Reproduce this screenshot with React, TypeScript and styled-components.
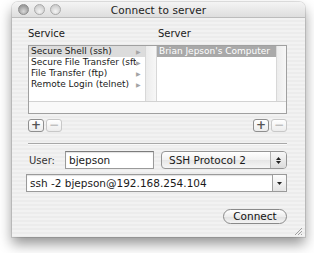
import React from 'react';
import styled, { createGlobalStyle } from 'styled-components';

const GlobalStyle = createGlobalStyle`
    html, body {
        margin: 0;
        padding: 0;
        background: #ffffff;
    }
    body {
        font-family: 'DejaVu Sans', 'Liberation Sans', sans-serif;
        color: #1a1a1a;
    }
`;

const Desktop = styled.div`
    width: 314px;
    height: 253px;
    padding: 2px 9px 0 12px;
    box-sizing: border-box;
`;

const Window = styled.div`
    width: 293px;
    height: 235px;
    border-radius: 6px 6px 0 0;
    overflow: hidden;
    display: flex;
    flex-direction: column;
    background: repeating-linear-gradient(to bottom, #f2f2f2 0, #f2f2f2 2px, #ececec 2px, #ececec 4px);
    box-shadow: 0 7px 13px rgba(0, 0, 0, 0.42), 0 0 0 1px rgba(0, 0, 0, 0.1);
`;

const TitleBar = styled.div`
    height: 15px;
    flex: none;
    display: grid;
    grid-template-columns: 1fr auto 1fr;
    align-items: center;
    background: linear-gradient(to bottom, #f4f4f4, #dedede);
    border-bottom: 1px solid #bcbcbc;
    padding: 0 6px;
`;

const Lights = styled.div`
    display: flex;
    gap: 5px;
    align-items: center;
`;

const Light = styled.span<{ $dark?: boolean }>`
    width: 11px;
    height: 11px;
    border-radius: 50%;
    box-sizing: border-box;
    border: 1px solid ${p => (p.$dark ? '#8d8d8d' : '#a9a9a9')};
    background: ${p =>
        p.$dark
            ? 'radial-gradient(circle at 50% 70%, #d8d8d8, #9c9c9c 70%)'
            : 'radial-gradient(circle at 50% 70%, #f4f4f4, #cdcdcd 75%)'};
`;

const Title = styled.div`
    font-size: 10.5px;
    color: #222;
    letter-spacing: 0.1px;
`;

const Body = styled.div`
    flex: 1;
    display: flex;
    flex-direction: column;
    padding: 9px 18px 0 16px;
    position: relative;
`;

const Labels = styled.div`
    display: grid;
    grid-template-columns: 130px 1fr;
    font-size: 10px;
    height: 13px;
    line-height: 13px;
    margin-bottom: 5px;
`;

const Browser = styled.div`
    height: 69px;
    border: 1px solid #a0a0a0;
    background: #fff;
    display: flex;
    flex-direction: column;
    box-sizing: border-box;
`;

const Columns = styled.div`
    flex: 1;
    display: grid;
    grid-template-columns: 116px 12px 119px 1fr;
`;

const Column = styled.div`
    background: #fff;
    display: flex;
    flex-direction: column;
    min-width: 0;
`;

const Scroller = styled.div`
    background: linear-gradient(to right, #ececec, #f7f7f7);
    border-left: 1px solid #d8d8d8;
    border-right: 1px solid #d8d8d8;
`;

const EndScroller = styled.div`
    background: linear-gradient(to right, #ececec, #f7f7f7);
    border-left: 1px solid #d8d8d8;
`;

const Row = styled.div<{ $sel?: 'light' | 'dark' }>`
    height: 11px;
    line-height: 11px;
    font-size: 9px;
    padding-left: 2px;
    display: flex;
    white-space: nowrap;
    overflow: hidden;
    background: ${p => (p.$sel === 'light' ? '#dcdcdc' : p.$sel === 'dark' ? '#a9a9a9' : 'transparent')};
    color: ${p => (p.$sel === 'dark' ? '#fff' : '#1a1a1a')};
`;

const RowText = styled.span`
    flex: 1;
    min-width: 0;
    overflow: hidden;
    text-overflow: clip;
`;

const Arrow = styled.span`
    font-size: 6px;
    color: #a4a4a4;
    width: 9px;
    flex: none;
`;

const BottomStrip = styled.div`
    height: 11px;
    border-top: 1px solid #d2d2d2;
    background: #f9f9f9;
`;

const ButtonRow = styled.div`
    display: flex;
    justify-content: space-between;
    margin-top: 5px;
    height: 13px;
`;

const PairGroup = styled.div`
    display: flex;
    gap: 2px;
`;

const SmallButton = styled.div<{ $disabled?: boolean }>`
    width: 16px;
    height: 13px;
    box-sizing: border-box;
    border: 1px solid ${p => (p.$disabled ? '#c8c8c8' : '#8f8f8f')};
    border-radius: 3px;
    background: linear-gradient(to bottom, #ffffff, #ececec);
    color: ${p => (p.$disabled ? '#c0c0c0' : '#555')};
    font-size: 12px;
    line-height: 10px;
    text-align: center;
    font-weight: bold;
`;

const Separator = styled.div`
    height: 1px;
    background: #a8a8a8;
    margin: 11px 0 6px;
    border-bottom: 1px solid #fafafa;
`;

const FormRow = styled.div`
    display: flex;
    align-items: center;
    height: 18px;
    margin-bottom: 5px;
`;

const UserLabel = styled.span`
    width: 36px;
    flex: none;
    font-size: 10px;
    color: #333;
    padding-left: 1px;
`;

const TextField = styled.div`
    width: 89px;
    height: 18px;
    box-sizing: border-box;
    border: 1px solid #9a9a9a;
    border-top-color: #7c7c7c;
    background: #fff;
    box-shadow: inset 0 1px 1px rgba(0, 0, 0, 0.12);
    font-size: 10.5px;
    line-height: 16px;
    padding-left: 3px;
    margin-right: 7px;
`;

const Popup = styled.div`
    flex: 1;
    height: 18px;
    box-sizing: border-box;
    border: 1px solid #959595;
    border-radius: 4px;
    background: linear-gradient(to bottom, #ffffff, #f1f1f1 50%, #e6e6e6 51%, #f6f6f6);
    display: flex;
    align-items: center;
    font-size: 10.5px;
    padding-left: 7px;
    overflow: hidden;
`;

const PopupText = styled.span`
    flex: 1;
`;

const Stepper = styled.div`
    width: 15px;
    align-self: stretch;
    border-left: 1px solid #b0b0b0;
    background: linear-gradient(to bottom, #f8f8f8, #dcdcdc);
    display: flex;
    flex-direction: column;
    align-items: center;
    justify-content: center;
    gap: 1px;
`;

const Combo = styled.div`
    flex: 1;
    height: 18px;
    box-sizing: border-box;
    border: 1px solid #9a9a9a;
    background: #fff;
    box-shadow: inset 0 1px 1px rgba(0, 0, 0, 0.12);
    display: flex;
    align-items: center;
    font-size: 10.5px;
    padding-left: 3px;
    margin-left: -2px;
`;

const ComboText = styled.span`
    flex: 1;
    white-space: nowrap;
`;

const ComboButton = styled.div`
    width: 13px;
    height: 16px;
    border-left: 1px solid #a0a0a0;
    border-radius: 0 2px 2px 0;
    background: linear-gradient(to bottom, #fdfdfd, #e4e4e4);
    display: flex;
    align-items: center;
    justify-content: center;
`;

const Footer = styled.div`
    display: flex;
    justify-content: flex-end;
    margin-top: 12px;
`;

const ConnectButton = styled.div`
    width: 64px;
    height: 15px;
    box-sizing: border-box;
    border: 1px solid #8a8a8a;
    border-radius: 8px;
    background: linear-gradient(to bottom, #ffffff, #ededed 50%, #e0e0e0 51%, #f4f4f4);
    font-size: 10.5px;
    line-height: 13px;
    text-align: center;
    color: #111;
`;

const Grip = styled.svg`
    position: absolute;
    right: 2px;
    bottom: 1px;
`;

function Triangle({ up }: { up?: boolean }) {
    return (
        <svg width="5" height="3" viewBox="0 0 5 3">
            <path d={up ? 'M2.5 0 L5 3 L0 3 Z' : 'M0 0 L5 0 L2.5 3 Z'} fill="#222" />
        </svg>
    );
}

const services = ['Secure Shell (ssh)', 'Secure File Transfer (sftp)', 'File Transfer (ftp)', 'Remote Login (telnet)'];

export default function App() {
    return (
        <Desktop>
            <GlobalStyle />
            <Window>
                <TitleBar>
                    <Lights>
                        <Light $dark />
                        <Light />
                        <Light />
                    </Lights>
                    <Title>Connect to server</Title>
                    <div />
                </TitleBar>
                <Body>
                    <Labels>
                        <span>Service</span>
                        <span>Server</span>
                    </Labels>
                    <Browser>
                        <Columns>
                            <Column>
                                {services.map((s, i) => (
                                    <Row key={s} $sel={i === 0 ? 'light' : undefined}>
                                        <RowText>{s}</RowText>
                                        <Arrow>▶</Arrow>
                                    </Row>
                                ))}
                            </Column>
                            <Scroller />
                            <Column>
                                <Row $sel="dark">
                                    <RowText>Brian Jepson's Computer</RowText>
                                </Row>
                            </Column>
                            <EndScroller />
                        </Columns>
                        <BottomStrip />
                    </Browser>
                    <ButtonRow>
                        <PairGroup>
                            <SmallButton>+</SmallButton>
                            <SmallButton $disabled>−</SmallButton>
                        </PairGroup>
                        <PairGroup>
                            <SmallButton>+</SmallButton>
                            <SmallButton $disabled>−</SmallButton>
                        </PairGroup>
                    </ButtonRow>
                    <Separator />
                    <FormRow>
                        <UserLabel>User:</UserLabel>
                        <TextField>bjepson</TextField>
                        <Popup>
                            <PopupText>SSH Protocol 2</PopupText>
                            <Stepper>
                                <Triangle up />
                                <Triangle />
                            </Stepper>
                        </Popup>
                    </FormRow>
                    <FormRow>
                        <Combo>
                            <ComboText>ssh -2 bjepson@192.168.254.104</ComboText>
                            <ComboButton>
                                <Triangle />
                            </ComboButton>
                        </Combo>
                    </FormRow>
                    <Footer>
                        <ConnectButton>Connect</ConnectButton>
                    </Footer>
                    <Grip width="9" height="9" viewBox="0 0 9 9">
                        <path d="M8 1 L1 8 M8 4 L4 8 M8 7 L7 8" stroke="#a0a0a0" strokeWidth="1" />
                    </Grip>
                </Body>
            </Window>
        </Desktop>
    );
}
